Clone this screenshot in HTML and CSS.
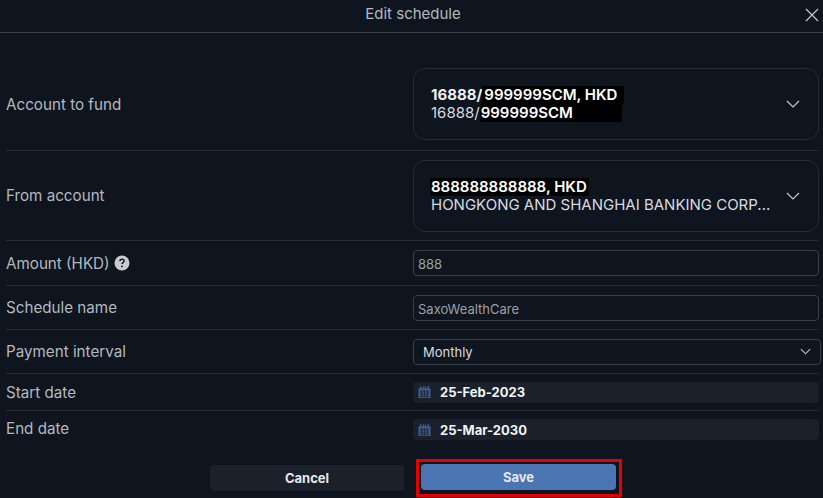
FILE: index.html
```html
<!DOCTYPE html>
<html lang="en">
<head>
<meta charset="utf-8">
<title>Edit schedule</title>
<link rel="stylesheet" href="styles.css">
</head>
<body>
<div class="dialog">
  <header class="head">
    <h1 class="title">Edit schedule</h1>
    <svg class="close" viewBox="0 0 14 14" width="14" height="14"><path d="M1 1l12 12M13 1L1 13" stroke="#c3c8cd" stroke-width="1.2" fill="none"/></svg>
  </header>
  <div class="form">
    <div class="row row-big first">
      <div class="label">Account to fund</div>
      <div class="card">
        <div class="lines">
          <div class="line"><b class="strong">16888/</b><span class="mask mask-a">999999SCM, HKD</span></div>
          <div class="line">16888/<span class="mask mask-b">999999SCM</span></div>
        </div>
        <svg class="chev" viewBox="0 0 14 8" width="14" height="8"><path d="M1 1l6 6 6-6" stroke="#c3c8cd" stroke-width="1.2" fill="none"/></svg>
      </div>
    </div>
    <div class="row row-big">
      <div class="label">From account</div>
      <div class="card">
        <div class="lines">
          <div class="line"><span class="mask mask-c">888888888888, HKD</span></div>
          <div class="line">HONGKONG AND SHANGHAI BANKING CORP...</div>
        </div>
        <svg class="chev" viewBox="0 0 14 8" width="14" height="8"><path d="M1 1l6 6 6-6" stroke="#c3c8cd" stroke-width="1.2" fill="none"/></svg>
      </div>
    </div>
    <div class="row row-amount">
      <div class="label">Amount (HKD)
        <svg class="help" viewBox="0 0 16 16" width="16" height="16"><circle cx="8" cy="8" r="7.5" fill="#c9cbce"/><path d="M5.9 6.2c0-1.2 1-1.9 2.1-1.9s2.1.7 2.1 1.8c0 1.5-2.1 1.5-2.1 3" stroke="#14191f" stroke-width="1.5" fill="none"/><circle cx="8" cy="11.4" r=".95" fill="#14191f"/></svg>
      </div>
      <div class="field">888</div>
    </div>
    <div class="row row-input">
      <div class="label">Schedule name</div>
      <div class="field">SaxoWealthCare</div>
    </div>
    <div class="row row-input">
      <div class="label">Payment interval</div>
      <div class="field select">Monthly
        <svg class="chev-sm" viewBox="0 0 12 7" width="11" height="7"><path d="M1 1l5 5 5-5" stroke="#c3c8cd" stroke-width="1.2" fill="none"/></svg>
      </div>
    </div>
    <div class="row row-date">
      <div class="label">Start date</div>
      <div class="date">
        <svg class="cal" viewBox="0 0 14 14" width="13" height="14"><path d="M0.5 3h13v10.5h-13z" fill="#3f5f94"/><path d="M3 .5v3M6 1v2M8 1v2M11 .5v3" stroke="#4f76b4" stroke-width="1"/><path d="M2 6h10M2 8h10M2 10h10M2 12h10M4 5v8M7 5v8M10 5v8" stroke="#1c2636" stroke-width=".8"/></svg>
        25-Feb-2023
      </div>
    </div>
    <div class="row row-date last">
      <div class="label">End date</div>
      <div class="date">
        <svg class="cal" viewBox="0 0 14 14" width="13" height="14"><path d="M0.5 3h13v10.5h-13z" fill="#3f5f94"/><path d="M3 .5v3M6 1v2M8 1v2M11 .5v3" stroke="#4f76b4" stroke-width="1"/><path d="M2 6h10M2 8h10M2 10h10M2 12h10M4 5v8M7 5v8M10 5v8" stroke="#1c2636" stroke-width=".8"/></svg>
        25-Mar-2030
      </div>
    </div>
  </div>
  <div class="actions">
    <button class="btn cancel">Cancel</button>
    <div class="highlight"><button class="btn save">Save</button></div>
  </div>
</div>
</body>
</html>
```
FILE: styles.css
```css
* { box-sizing: border-box; }
html, body { margin: 0; padding: 0; }
body {
  width: 823px;
  height: 498px;
  overflow: hidden;
  background: #0e151e;
  font-family: Inter, "Liberation Sans", sans-serif;
  color: #c3c8cd;
}
.dialog { display: flex; flex-direction: column; height: 498px; }
.head {
  height: 33px;
  flex: none;
  border-bottom: 1px solid #3a4149;
  display: flex;
  align-items: center;
  justify-content: center;
  position: relative;
  padding: 0 0 5px 3px;
}
.title { margin: 0; font-size: 15px; font-weight: 400; color: #b4b9bf; }
.close { position: absolute; right: 4px; top: 8px; }
.form { padding: 0 4px 0 6px; display: flex; flex-direction: column; }
.row {
  display: grid;
  grid-template-columns: 407px 406px;
  align-items: center;
  border-bottom: 1px solid #252c34;
}
.row.first { padding-top: 25px; height: 118px; }
.row-big { height: 90px; padding-top: 0; }
.row-amount { height: 45px; }
.row-input { height: 44px; }
.row-date { height: 37px; }
.row.last { border-bottom: 0; }
.last .label { padding-bottom: 2px; }
.label { font-size: 15.2px; color: #b4b9bf; display: flex; align-items: center; gap: 4px; }
.card {
  height: 72px;
  border: 1px solid #262d35;
  border-radius: 12px;
  padding: 0 19px 0 17px;
  display: flex;
  align-items: center;
  justify-content: space-between;
}
.line { font-size: 15px; line-height: 18px; height: 18px; color: #d7dbe0; white-space: nowrap; }
.strong { font-weight: 700; color: #eef0f2; }
.mask { background: #000; color: #fff; font-weight: 600; display: inline-block; height: 18px; }
.mask-a { width: 142px; padding-left: 2px; }
.mask-b { width: 142px; padding-left: 1px; }
.mask-c { width: 159px; padding-left: 1px; margin-left: -1px; }
.chev { margin-right: -1px; flex: none; }
.field {
  height: 26px;
  border: 1px solid #383f47;
  border-radius: 4px;
  padding: 0 4px;
  font-size: 13px;
  line-height: 26px;
  color: #9aa0a6;
}
.select {
  margin-right: -2px;
  padding: 0 9px;
  color: #d7dbe0;
  display: flex;
  align-items: center;
  justify-content: space-between;
}
.date {
  height: 21px;
  background: #1a212a;
  border-radius: 4px;
  padding-left: 5px;
  display: flex;
  align-items: center;
  gap: 9px;
  font-size: 13px;
  font-weight: 700;
  color: #f2f3f5;
}
.cal { flex: none; }
.actions {
  margin-top: 11px;
  padding-left: 210px;
  display: flex;
  align-items: center;
  gap: 6px;
}
.btn {
  height: 26px;
  border: 0;
  border-radius: 4px;
  font-family: inherit;
  font-size: 13px;
  font-weight: 700;
  color: #e6e8ea;
  padding: 0;
}
.cancel { width: 194px; margin-right: 6px; background: #1a212a; }
.highlight { border: 3px solid #e60000; padding: 2px; width: 206px; height: 38px; }
.save { width: 195px; background: #4a74b2; display: block; }
```
